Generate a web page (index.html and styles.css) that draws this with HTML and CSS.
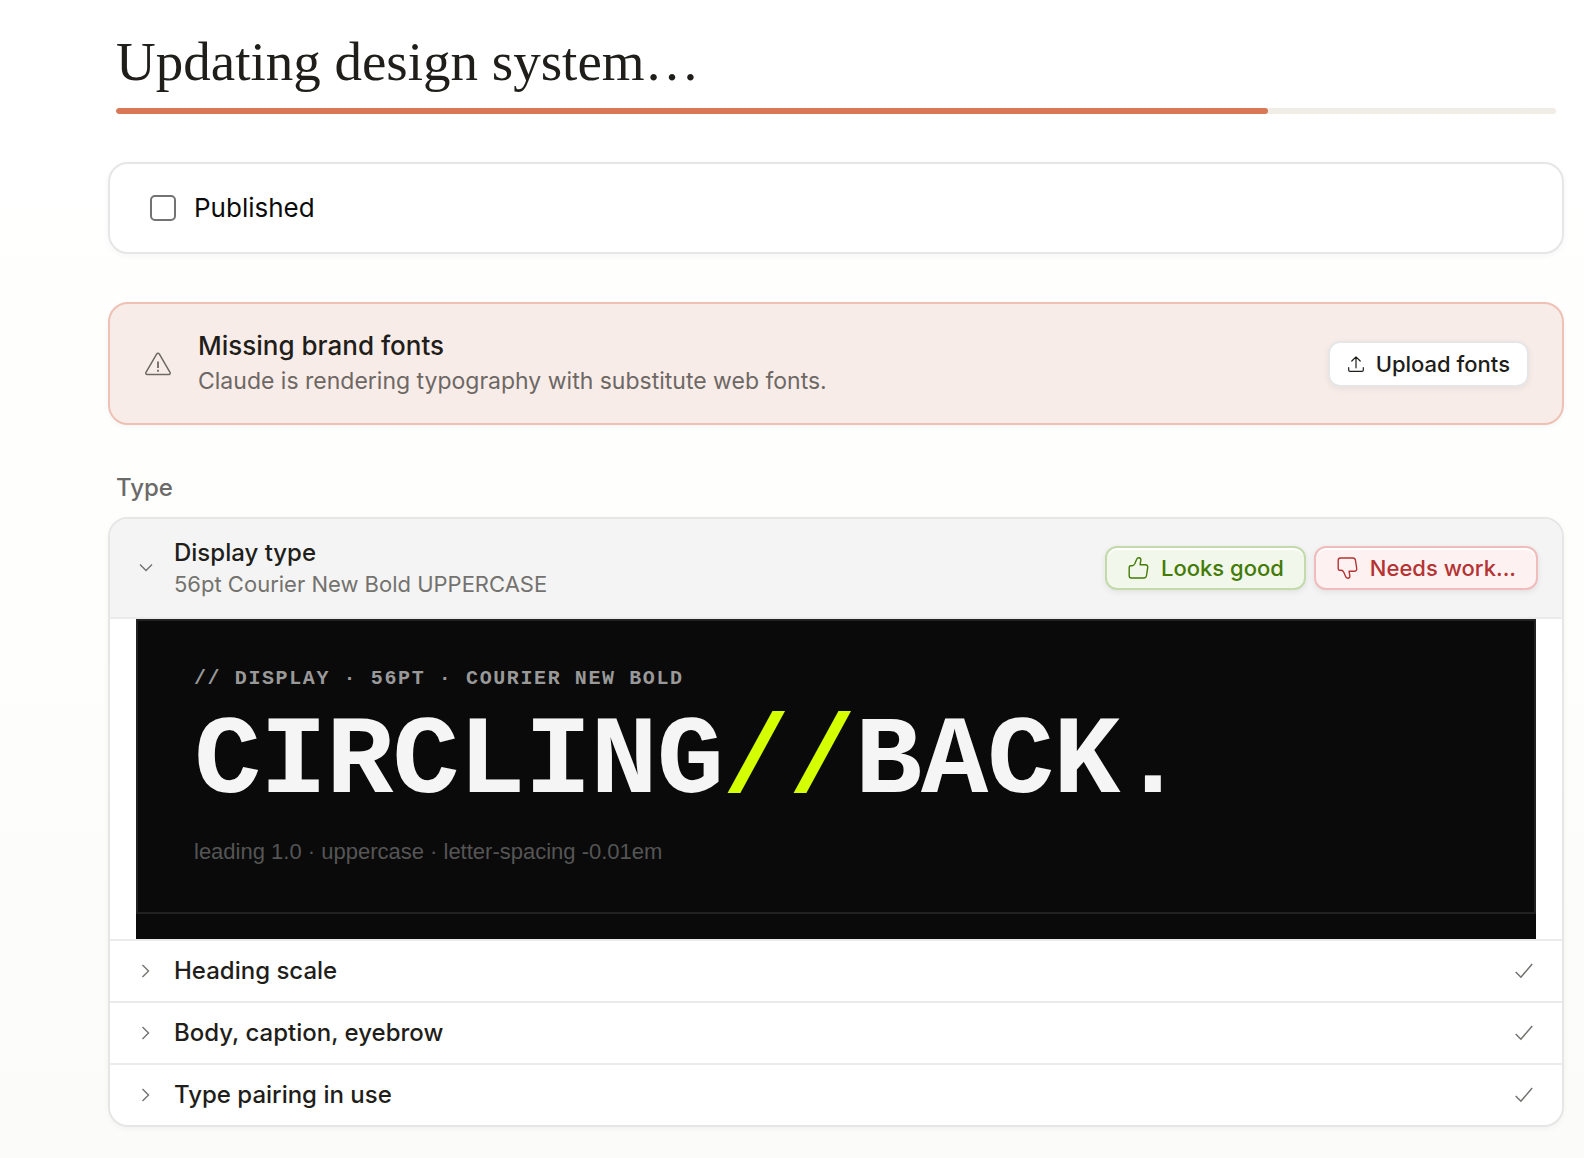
FILE: index.html
```
<!DOCTYPE html>
<html lang="en">
<head>
    <meta charset="UTF-8" />
    <meta name="viewport" content="width=device-width, initial-scale=1.0" />
    <title>Updating design system…</title>
    <link rel="stylesheet" href="styles.css">
</head>
<body>
    <main class="page">
        <header class="page-header">
            <h1 id="page-title">Updating design system…</h1>
            <progress class="progress" value="80" max="100" aria-labelledby="page-title"></progress>
        </header>

        <section class="card publish">
            <input type="checkbox" id="published" class="checkbox">
            <label for="published">Published</label>
        </section>

        <section class="card banner">
            <svg class="banner-icon" viewBox="0 0 28 28" fill="none" stroke="currentColor" stroke-width="1.5" stroke-linejoin="round">
                <path d="M12.6 4.1 2 22.3c-.6 1.2 0 2.2 1.2 2.2h21.6c1.2 0 1.8-1 1.2-2.2L15.4 4.1c-.7-1.1-2.1-1.1-2.8 0z"/>
                <path d="M14 11.5v6.500M14 19.7v2" stroke-width="1.8"/>
            </svg>
            <div class="banner-text">
                <h2>Missing brand fonts</h2>
                <p>Claude is rendering typography with substitute web fonts.</p>
            </div>
            <button type="button" class="button upload">
                <svg class="upload-icon" viewBox="0 0 16 16" fill="none" stroke="currentColor" stroke-width="1.2" stroke-linecap="round" stroke-linejoin="round">
                    <path d="M8 11.8V.8M3.8 5 8 .8 12.2 5M.7 11.7V14c0 .8.5 1.300 1.300 1.300h12c.8 0 1.300-.5 1.300-1.300v-2.300"/>
                </svg>
                Upload fonts
            </button>
        </section>

        <section class="group">
            <h2 class="group-title">Type</h2>
            <div class="card list">
                <!-- Open row with its review buttons -->
                <div class="row row-open">
                    <button type="button" class="toggle" aria-expanded="true" aria-controls="display-preview">
                        <svg class="chevron" viewBox="0 0 14 14" fill="none" stroke="currentColor" stroke-width="1.4">
                            <path d="M1 3.500l6 6 6-6"/>
                        </svg>
                        <span class="row-text">
                            <span class="row-title">Display type</span>
                            <span class="row-sub">56pt Courier New Bold UPPERCASE</span>
                        </span>
                    </button>
                    <div class="actions">
                        <button type="button" class="button good">
                            <svg class="thumb" viewBox="0 0 22 22" fill="none" stroke="currentColor" stroke-width="1.4" stroke-linejoin="round">
                                <path d="M2.2 10.3c0-1 .6-1.6 1.6-1.6h1.4c1.3 0 2-.8 2.6-2L9.6 2.4C10 1.3 10.7.8 11.8.8c1.5 0 2.3 1.1 2 2.6L13.1 7.7h5.2c1.7 0 2.7 1.2 2.4 2.9l-1.2 7.9c-.2 1.5-1.2 2.5-2.7 2.5H4.4c-1.4 0-2.2-.8-2.2-2.2z"/>
                            </svg>
                            Looks good
                        </button>
                        <button type="button" class="button bad">
                            <svg class="thumb" viewBox="0 0 22 22" fill="none" stroke="currentColor" stroke-width="1.4" stroke-linejoin="round">
                                <path d="M2.2 11.7c0 1 .6 1.6 1.6 1.6h1.4c1.3 0 2 .8 2.6 2l1.8 4.3c.4 1.1 1.1 1.6 2.2 1.6 1.5 0 2.3-1.1 2-2.6l-.7-4.3h5.2c1.7 0 2.7-1.2 2.4-2.9l-1.2-7.9C19.3 2 18.3 1 16.8 1H4.4C3 1 2.2 1.800 2.2 3.2z"/>
                            </svg>
                            Needs work...
                        </button>
                    </div>
                </div>

                <div class="preview" id="display-preview">
                    <div class="specimen">
                        <p class="eyebrow">// Display · 56pt · Courier New Bold</p>
                        <p class="display">Circling<span class="slashes">//</span>back.</p>
                        <p class="note">leading 1.0 · uppercase · letter-spacing -0.01em</p>
                    </div>
                </div>

                <button type="button" class="row toggle" aria-expanded="false">
                    <svg class="chevron" viewBox="0 0 14 14" fill="none" stroke="currentColor" stroke-width="1.4">
                        <path d="M3.500 1l6 6-6 6"/>
                    </svg>
                    <span class="row-title">Heading scale</span>
                    <svg class="check" viewBox="0 0 18 16" fill="none" stroke="currentColor" stroke-width="1.5">
                        <path d="M.7 9l5.200 5.200L17.200 1"/>
                    </svg>
                </button>
                <button type="button" class="row toggle" aria-expanded="false">
                    <svg class="chevron" viewBox="0 0 14 14" fill="none" stroke="currentColor" stroke-width="1.4">
                        <path d="M3.500 1l6 6-6 6"/>
                    </svg>
                    <span class="row-title">Body, caption, eyebrow</span>
                    <svg class="check" viewBox="0 0 18 16" fill="none" stroke="currentColor" stroke-width="1.5">
                        <path d="M.7 9l5.200 5.200L17.200 1"/>
                    </svg>
                </button>
                <button type="button" class="row toggle" aria-expanded="false">
                    <svg class="chevron" viewBox="0 0 14 14" fill="none" stroke="currentColor" stroke-width="1.4">
                        <path d="M3.500 1l6 6-6 6"/>
                    </svg>
                    <span class="row-title">Type pairing in use</span>
                    <svg class="check" viewBox="0 0 18 16" fill="none" stroke="currentColor" stroke-width="1.5">
                        <path d="M.7 9l5.200 5.200L17.200 1"/>
                    </svg>
                </button>
            </div>
        </section>
    </main>
</body>
</html>
```

FILE: styles.css
```
* {
    box-sizing: border-box;
}

body {
    margin: 0;
    min-height: 100vh;
    font-family: Inter, "Liberation Sans", sans-serif;
    font-size: 24px;
    line-height: 32px;
    color: #1f1e1a;
    background: linear-gradient(#ffffff, #fefefd 50%, #fbfbf9);
}

h1, h2, p {
    margin: 0;
}

button {
    font: inherit;
    color: inherit;
    cursor: pointer;
}

svg {
    flex: none;
}

.page {
    display: flex;
    flex-direction: column;
    gap: 48px;
    padding: 30px 20px 31px 108px;
}

/* Title and progress */
.page-header {
    display: flex;
    flex-direction: column;
    gap: 14px;
    padding: 0 8px;
}

h1 {
    font-family: "Liberation Serif", serif;
    font-size: 55px;
    font-weight: 400;
    line-height: 64px;
}

.progress {
    display: block;
    width: 100%;
    height: 6px;
    border: none;
    border-radius: 3px;
    overflow: hidden;
    appearance: none;
    background: #f0ede6;
}
.progress::-webkit-progress-bar {
    background: #f0ede6;
}
.progress::-webkit-progress-value {
    background: #d97757;
    border-radius: 3px;
}

/* Cards */
.card {
    background: #ffffff;
    border: 2px solid #e6e6e6;
    border-radius: 20px;
    box-shadow: 0 2px 6px rgba(0, 0, 0, 0.04);
}

.publish {
    display: flex;
    align-items: center;
    gap: 18px;
    padding: 28px 40px;
    font-size: 26px;
    color: #0b0b0b;
}

.checkbox {
    width: 26px;
    height: 26px;
    margin: 0;
    appearance: none;
    background: #ffffff;
    border: 2px solid #737373;
    border-radius: 5px;
}
.checkbox:checked {
    background: #d97757;
    border-color: #d97757;
}

/* Missing fonts banner */
.banner {
    display: flex;
    align-items: center;
    gap: 26px;
    padding: 24px 33px 24px 34px;
    background: #f8ece9;
    border-color: #efc1b5;
}

.banner-icon {
    width: 28px;
    height: 28px;
    color: #6d6864;
}

.banner-text {
    flex: 1;
}
.banner-text h2 {
    font-size: 26px;
    font-weight: 500;
    line-height: 36px;
}
.banner-text p {
    font-size: 23px;
    line-height: 35px;
    color: #6d6864;
}

/* Buttons */
.button {
    display: flex;
    align-items: center;
    height: 44px;
    padding: 0 20px;
    gap: 12px;
    font-size: 22px;
    font-weight: 500;
    border: 2px solid #e6e6e6;
    border-radius: 12px;
    box-shadow: 0 2px 6px rgba(0, 0, 0, 0.06);
    white-space: nowrap;
}

.upload {
    height: 46px;
    padding: 0 17px 0 18px;
    background: #ffffff;
}

.upload-icon {
    width: 16px;
    height: 16px;
}

.good {
    color: #437b06;
    background: #f1f7ea;
    border-color: #c3daab;
    box-shadow: inset 0 2px 0 #ffffff, 0 2px 6px rgba(0, 0, 0, 0.08);
}

.bad {
    color: #b53333;
    background: #fdf2f1;
    border-color: #f0bcbc;
    box-shadow: inset 0 2px 0 #ffffff, 0 2px 6px rgba(0, 0, 0, 0.08);
}

.thumb {
    width: 22px;
    height: 22px;
}

/* Type list */
.group {
    display: flex;
    flex-direction: column;
    gap: 14px;
}

.group-title {
    padding: 0 8px;
    font-size: 24px;
    font-weight: 500;
    line-height: 30px;
    color: #6b6a68;
}

.list {
    overflow: hidden;
}

.row {
    width: 100%;
    min-height: 62px;
    border: none;
    border-top: 2px solid #ebebeb;
}

.toggle {
    display: flex;
    align-items: center;
    gap: 21px;
    padding: 0 29px;
    text-align: left;
    background: none;
}

.row-open {
    display: flex;
    align-items: center;
    border-top: none;
    border-bottom: 2px solid #ebebeb;
    background: #f4f4f4;
}
.row-open .toggle {
    flex: 1;
    padding: 18px 29px;
    border: none;
}

.chevron {
    width: 14px;
    height: 14px;
    color: #73726e;
}

.row-text {
    display: flex;
    flex-direction: column;
}

.row-title {
    flex: 1;
    font-size: 24px;
    font-weight: 500;
    line-height: 32px;
}

.row-sub {
    font-size: 22px;
    line-height: 30px;
    color: #73726e;
}

.actions {
    display: flex;
    gap: 8px;
    padding-right: 24px;
}

.check {
    width: 18px;
    height: 16px;
    color: #73726e;
}

/* Display specimen */
.preview {
    margin: 0 26px;
    padding-bottom: 25px;
    background: #0a0a0a;
}

.specimen {
    padding: 46px 56px 47px;
    border: 2px solid #222222;
}

.eyebrow {
    font-family: "Liberation Mono", monospace;
    font-size: 20px;
    font-weight: 700;
    line-height: 24px;
    letter-spacing: 0.08em;
    text-transform: uppercase;
    color: #999999;
}

.display {
    margin: 16px 0 20px;
    font-family: "Liberation Mono", monospace;
    font-size: 112px;
    font-weight: 700;
    line-height: 1;
    letter-spacing: -0.01em;
    text-transform: uppercase;
    color: #f5f5f5;
}

.slashes {
    color: #d4ff00;
}

.note {
    font-family: "Liberation Sans", sans-serif;
    font-size: 22px;
    line-height: 26px;
    color: #555555;
}
```
